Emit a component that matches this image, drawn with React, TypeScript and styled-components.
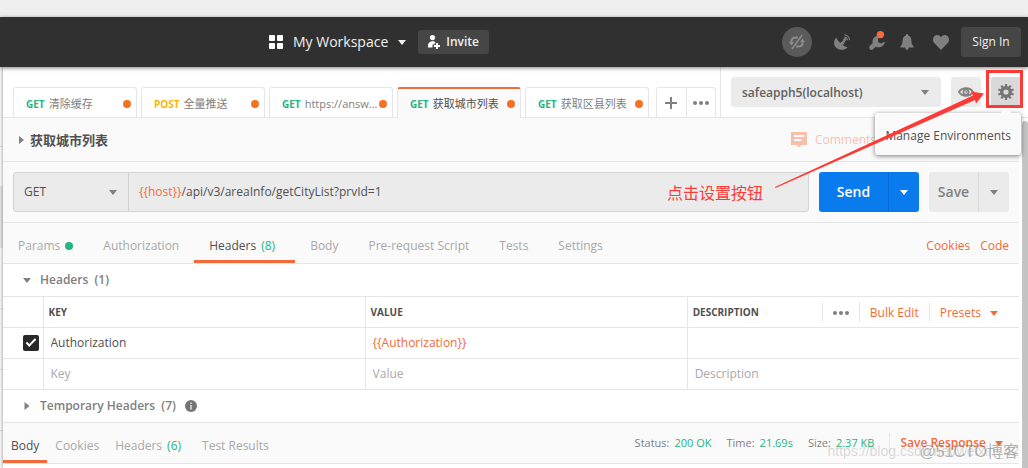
import React from "react";
import styled, { createGlobalStyle, css } from "styled-components";

const GlobalStyle = createGlobalStyle`
  *, *::before, *::after { box-sizing: border-box; }
  body {
    margin: 0;
    background: #fff;
    color: #505050;
    font-family: "Open Sans", "Noto Sans CJK SC", sans-serif;
    font-size: 12px;
    line-height: 20px;
  }
  html, body { height: 100%; overflow: hidden; }
  #root { height: 100%; }
  button, input, select {
    font: inherit;
    color: inherit;
    margin: 0;
    padding: 0;
    border: 0;
    border-radius: 0;
    background: none;
  }
  button { cursor: pointer; white-space: nowrap; }
  h2 { margin: 0; font: inherit; }
  a { color: inherit; text-decoration: none; }
`;

const ORANGE = "#f26b3a";
const GREEN = "#26b47f";
const LINE = "#e6e6e6";
const RED = "#fd3a36";

/* ---------- frame ---------- */

const Page = styled.div`
  position: relative;
  display: flex;
  flex-direction: column;
  min-height: 100%;
  overflow: hidden;
`;

const TitleStrip = styled.div`
  height: 17px;
  background: #efefef;
`;

const TopBar = styled.header`
  position: relative;
  z-index: 2;
  display: flex;
  align-items: center;
  justify-content: space-between;
  height: 50px;
  padding: 0 7px 0 269px;
  background: #303030;
  box-shadow: 0 1px 4px rgba(0, 0, 0, 0.5);
  color: #f0f0f0;
`;

const WorkspaceGroup = styled.div`
  display: flex;
  align-items: center;
`;

const WorkspaceButton = styled.button`
  display: flex;
  align-items: center;
  gap: 10px;
  font-size: 14px;
  font-weight: 500;
  margin-right: 12px;
`;

const InviteButton = styled.button`
  display: flex;
  align-items: center;
  gap: 5px;
  height: 24px;
  padding: 0 10px 0 9px;
  border-radius: 3px;
  background: #464646;
  font-weight: 600;
`;

const TopActions = styled.div`
  display: flex;
  justify-content: flex-end;
  align-items: center;
`;

const TopIcon = styled.button<{ $w: number; $gap: number }>`
  display: flex;
  justify-content: center;
  width: ${(p) => p.$w}px;
  margin-right: ${(p) => p.$gap}px;
  color: #808080;
`;

const SyncBadge = styled.button`
  display: grid;
  place-items: center;
  width: 30px;
  height: 30px;
  margin-right: 20px;
  border-radius: 50%;
  background: #5a5a5a;
  color: #8c8c8c;
`;

const SignIn = styled.button`
  width: 60px;
  height: 30px;
  border-radius: 3px;
  background: #464646;
`;

const Workarea = styled.div`
  display: flex;
  flex: 1;
`;

const SidebarEdge = styled.aside`
  flex: none;
  width: 3px;
  background: linear-gradient(
    #fff 0 79px, #e6e6e6 79px 80px, #fff 80px 119px,
    #ebebeb 119px 181px, #fff 181px 241px,
    #e6e6e6 241px 242px, #fff 242px 302px,
    #e6e6e6 302px 303px, #fff 303px 363px,
    #e6e6e6 363px 364px, #fff 364px
  );
`;

const Main = styled.main`
  flex: 1;
  min-width: 0;
  display: flex;
  flex-direction: column;
  box-shadow: 0 0 4px rgba(0, 0, 0, 0.5);
`;

/* ---------- request tabs and environment ---------- */

const TabStrip = styled.div`
  display: flex;
  height: 51px;
  border-bottom: 1px solid ${LINE};
  background: #fff;
`;

const Tabs = styled.div`
  flex: 1;
  min-width: 0;
  display: flex;
  align-items: flex-end;
  gap: 4px;
  padding: 0 4px 0 10px;
`;

const Tab = styled.button<{ $active?: boolean }>`
  display: flex;
  align-items: center;
  flex: 0 1 124px;
  height: 30px;
  padding: 3px 5px 0 12px;
  border: 1px solid ${LINE};
  border-bottom: 0;
  border-radius: 3px 3px 0 0;
  color: #808080;
  ${(p) =>
    p.$active &&
    css`
      height: 31px;
      margin-bottom: -1px;
      padding-top: 1px;
      border-top: 2px solid ${ORANGE};
      background: #fafafa;
      color: #505050;
    `}
`;

const Method = styled.span<{ $post?: boolean }>`
  margin-right: 4px;
  font-size: 10px;
  font-weight: 700;
  color: ${(p) => (p.$post ? "#ffb400" : GREEN)};
`;

const TabName = styled.span`
  flex: 1;
  font-size: 11px;
  text-align: left;
`;

const Dot = styled.span<{ $color: string }>`
  flex: none;
  width: 8px;
  height: 8px;
  border-radius: 50%;
  background: ${(p) => p.$color};
`;

const TabTools = styled.div`
  display: flex;
  width: 60px;
  height: 30px;
  margin-left: 3px;
  border: 1px solid ${LINE};
  border-bottom: 0;
  border-radius: 3px 3px 0 0;
`;

const TabTool = styled.button`
  flex: 1;
  display: grid;
  place-items: center;
  color: #808080;
  & + & { border-left: 1px solid ${LINE}; }
`;

const EnvBar = styled.div`
  display: flex;
  align-items: center;
  gap: 10px;
  padding: 0 7px 0 10px;
  border-left: 1px solid ${LINE};
`;

const SelectWrap = styled.label`
  display: grid;
  align-items: center;
  & > * { grid-area: 1 / 1; }
  & > svg { justify-self: end; margin-right: 12px; pointer-events: none; color: #808080; }
`;

const EnvSelect = styled.select`
  appearance: none;
  width: 210px;
  height: 30px;
  padding: 1px 11px 0;
  border-radius: 3px;
  background: #ebebeb;
  color: #606060;
  font-weight: 600;
`;

const SquareButton = styled.button<{ $pressed?: boolean }>`
  display: grid;
  place-items: center;
  width: 30px;
  height: 30px;
  border-radius: 3px;
  background: ${(p) => (p.$pressed ? "#d9d9d9" : "#ebebeb")};
  color: #808080;
`;

const GearSlot = styled.div`
  position: relative;
`;

const GearFrame = styled.span`
  position: absolute;
  inset: -7px -2px -1px -5px;
  border: 3px solid ${RED};
  pointer-events: none;
  z-index: 4;
`;

const Tooltip = styled.div`
  position: absolute;
  z-index: 3;
  top: 36px;
  right: 0;
  padding: 13px 10px 9px;
  border-radius: 3px;
  background: #fafafa;
  box-shadow: 0 1px 5px rgba(0, 0, 0, 0.5);
  white-space: nowrap;
  &::before {
    content: "";
    position: absolute;
    top: -4px;
    right: 11px;
    width: 8px;
    height: 8px;
    background: #fafafa;
    transform: rotate(45deg);
  }
`;

/* ---------- request builder ---------- */

const Scroller = styled.div`
  flex: 1;
  display: flex;
  background: #fff;
`;

const Content = styled.div`
  flex: 1;
  min-width: 0;
`;

const ScrollTrack = styled.div`
  flex: none;
  width: 9px;
  padding: 3px 0 0 3px;
  background: #fff;
  display: flex;
`;

const ScrollThumb = styled.div`
  flex: 1;
  border-radius: 3px 3px 0 0;
  background: #c4c4c4;
`;

const NameRow = styled.div`
  display: flex;
  align-items: center;
  justify-content: space-between;
  height: 44px;
  padding: 0 143px 0 16px;
  border-bottom: 1px solid ${LINE};
  background: #fafafa;
`;

const RequestName = styled.h2`
  display: flex;
  align-items: center;
  gap: 6px;
  font-size: 13px;
  font-weight: 700;
`;

const CommentsButton = styled.button`
  display: flex;
  align-items: center;
  gap: 8px;
  color: ${ORANGE};
  opacity: 0.4;
`;

const UrlRow = styled.div`
  display: flex;
  gap: 10px;
  padding: 10px;
  border-bottom: 1px solid ${LINE};
  background: #fafafa;
`;

const UrlBox = styled.div`
  flex: 1;
  min-width: 0;
  display: flex;
  height: 40px;
  border: 1px solid #d4d4d4;
  border-radius: 3px;
  background: #ebebeb;
`;

const MethodSelect = styled.select`
  appearance: none;
  width: 115px;
  height: 38px;
  padding: 0 10px;
  border-right: 1px solid #d4d4d4;
  font-weight: 500;
`;

const UrlField = styled.div`
  flex: 1;
  min-width: 0;
  display: grid;
  align-items: center;
  padding: 0 10px;
  & > * { grid-area: 1 / 1; }
`;

const UrlInput = styled.input`
  width: 100%;
  height: 38px;
  color: transparent;
  caret-color: #505050;
`;

const UrlText = styled.div`
  white-space: nowrap;
  overflow: hidden;
`;

const Variable = styled.span`
  color: ${ORANGE};
`;

const SplitButton = styled.div<{ $primary?: boolean }>`
  display: flex;
  flex: none;
  height: 40px;
  border-radius: 3px;
  overflow: hidden;
  font-size: 14px;
  font-weight: 600;
  background: ${(p) => (p.$primary ? "#097bed" : "#ebebeb")};
  color: ${(p) => (p.$primary ? "#fff" : "#808080")};
  & > button:first-child { width: ${(p) => (p.$primary ? 69 : 49)}px; }
  & > button:last-child {
    display: grid;
    place-items: center;
    width: 31px;
    border-left: 1px solid ${(p) => (p.$primary ? "#056cd3" : "#d9d9d9")};
  }
`;

const SectionTabs = styled.nav`
  display: flex;
  height: 41px;
  padding: 0 10px 0 0;
  border-bottom: 1px solid ${LINE};
  background: #fafafa;
`;

const Count = styled.span`
  color: ${GREEN};
`;

const SectionTab = styled.button<{ $active?: boolean; $tight?: boolean }>`
  display: flex;
  align-items: center;
  gap: 5px;
  padding: ${(p) => (p.$tight ? "9px 8px 0" : "8px 15px 0")};
  border-bottom: 3px solid ${(p) => (p.$active ? ORANGE : "transparent")};
  color: ${(p) => (p.$active ? "#505050" : "#a9a9a9")};
  & > ${Count} { margin-right: 5px; }
`;

const RequestLinks = styled.div`
  display: flex;
  align-items: center;
  gap: 10px;
  margin-left: auto;
  padding-top: 6px;
  color: ${ORANGE};
`;

const GroupTitle = styled.button`
  display: flex;
  align-items: center;
  width: 100%;
  height: 32px;
  padding: 0 20px;
  color: #808080;
  font-weight: 600;
  & > svg:first-child { width: 8px; margin-right: 9px; }
  & > svg:last-child:not(:first-child) { margin-left: 9px; }
`;

const Table = styled.table`
  width: 100%;
  border-collapse: collapse;
  table-layout: fixed;
  border-top: 1px solid ${LINE};
  th, td {
    height: 31px;
    padding: 0 7px;
    border-bottom: 1px solid ${LINE};
    text-align: left;
    font-weight: 400;
  }
  th { padding: 0 5px; font-size: 10px; font-weight: 700; }
  th + th, td + td { border-left: 1px solid ${LINE}; }
`;

const CheckColumn = styled.col`
  width: 40px;
`;

const FieldColumn = styled.col`
  width: 31.7%;
`;

const CheckCell = styled.td`
  && { padding: 0 0 0 20px; }
`;

const CheckBox = styled.input`
  appearance: none;
  display: block;
  width: 16px;
  height: 16px;
  border-radius: 2px;
  background: #282828;
  &:checked::after {
    content: "";
    display: block;
    width: 10px;
    height: 5px;
    margin: 4px 0 0 3px;
    border: solid #fff;
    border-width: 0 0 2px 2px;
    transform: rotate(-45deg);
  }
`;

const CellInput = styled.input<{ $variable?: boolean }>`
  display: block;
  width: 100%;
  height: 20px;
  color: ${(p) => (p.$variable ? ORANGE : "#505050")};
  &::placeholder { color: #a9a9a9; opacity: 1; }
`;

const HeadTools = styled.div`
  display: flex;
  align-items: center;
  justify-content: space-between;
`;

const ToolGroup = styled.div`
  display: flex;
  align-items: center;
  margin-right: 6px;
  font-size: 12px;
  font-weight: 400;
  color: ${ORANGE};
`;

const ToolButton = styled.button`
  display: flex;
  align-items: center;
  gap: 9px;
  height: 20px;
  padding: 2px 10px 0;
  border-left: 1px solid ${LINE};
`;

/* ---------- response ---------- */

const ResponseBar = styled(SectionTabs)`
  border-top: 1px solid ${LINE};
  height: 42px;
`;

const Status = styled.div`
  display: flex;
  align-items: center;
  gap: 15px;
  margin-left: auto;
  font-size: 11px;
  color: #808080;
`;

const Metric = styled.span`
  display: flex;
  gap: 5px;
`;

const SaveResponse = styled.button`
  display: flex;
  align-items: center;
  gap: 9px;
  height: 20px;
  padding: 0 6px 0 10px;
  border-left: 1px solid ${LINE};
  color: ${ORANGE};
  font-size: 12px;
  font-weight: 600;
`;

/* ---------- annotation ---------- */

const Note = styled.p`
  position: absolute;
  z-index: 5;
  top: 182px;
  right: 265px;
  margin: 0;
  font-size: 16px;
  line-height: 22px;
  color: ${RED};
`;

const Arrow = styled.svg`
  position: absolute;
  z-index: 5;
  top: 88px;
  right: 43px;
  pointer-events: none;
`;

const Watermark = styled.span<{ $front?: boolean }>`
  position: absolute;
  z-index: 5;
  bottom: ${(p) => (p.$front ? 6 : 7)}px;
  right: 9px;
  font-family: "Liberation Sans", "Noto Sans CJK SC", sans-serif;
  font-size: ${(p) => (p.$front ? 16 : 14)}px;
  white-space: nowrap;
  pointer-events: none;
  color: ${(p) => (p.$front ? "rgba(120,120,120,0.55)" : "rgba(150,150,150,0.35)")};
`;

/* ---------- icons ---------- */

const Caret = ({ side }: { side?: boolean }) =>
  side ? (
    <svg width="5" height="8" viewBox="0 0 5 8" fill="#808080"><path d="M0 0L5 4L0 8Z" /></svg>
  ) : (
    <svg width="8" height="5" viewBox="0 0 8 5" fill="currentColor"><path d="M0 0H8L4 5Z" /></svg>
  );

const More = () => (
  <svg width="16" height="4" viewBox="0 0 16 4" fill="#808080">
    <circle cx="2" cy="2" r="2" /><circle cx="8" cy="2" r="2" /><circle cx="14" cy="2" r="2" />
  </svg>
);

const GridIcon = () => (
  <svg width="14" height="14" viewBox="0 0 14 14" fill="#fff">
    <rect width="6" height="6" rx="1" /><rect x="8" width="6" height="6" rx="1" />
    <rect y="8" width="6" height="6" rx="1" /><rect x="8" y="8" width="6" height="6" rx="1" />
  </svg>
);

const InviteIcon = () => (
  <svg width="14" height="14" viewBox="0 0 14 14" fill="#fff">
    <circle cx="5.5" cy="2.6" r="2.6" />
    <path d="M1 12.5V10.5C1 8 3 6.2 5.5 6.2C7 6.2 8 6.7 8.6 7.4L7.5 8.4V9.5H5.5V12.5Z" />
    <path d="M9 8H11V10H13V12H11V14H9V12H7V10H9Z" />
  </svg>
);

const SyncIcon = () => (
  <svg width="16" height="16" viewBox="0 0 16 16" fill="none" stroke="currentColor" strokeWidth="2">
    <path d="M2.4 9V7.6C2.4 5 4.5 3.4 7.5 3.4H9" />
    <path d="M13.6 7V8.4C13.6 11 11.5 12.6 8.5 12.6H7" />
    <path d="M0 8L2.4 11.5L5 8ZM11 8L13.6 4.5L16 8Z" fill="currentColor" stroke="none" />
    <path d="M13.2 1L3 15" strokeWidth="1.6" />
  </svg>
);

const DishIcon = () => (
  <svg width="16" height="16" viewBox="0 0 16 16" fill="currentColor">
    <path d="M2.2 3.4C-.6 6.5 -.6 11 2.3 13.7C5 16.5 10.2 16.6 13.6 13.4Q9.5 12.4 6 8.8Q3 6 2.2 3.4Z" />
    <path d="M5 11L11 5.8L9 10Z" stroke="currentColor" strokeWidth="1.4" />
    <circle cx="10.8" cy="5.6" r="1.5" />
    <path d="M10.3 3A3.2 3.2 0 0 1 13.3 6.2M10.3 .7A5.6 5.6 0 0 1 15.5 6.2" fill="none" stroke="currentColor" strokeWidth="1.1" />
  </svg>
);

const WrenchIcon = () => (
  <svg width="18" height="20" viewBox="0 0 18 20" overflow="visible">
    <path
      transform="translate(1 2)"
      fill="#808080"
      d="M9 1.4C5.2 2 2.8 5.200 3.8 9L.5 12.200C-.6 14.400 1.600 16.800 3.800 15.600L6.600 12.800C10.800 14.400 15.400 12.200 16 7.400L12.200 9.600L9.200 8.200L9 5L12 1.400Z"
    />
    <circle cx="12.4" cy="2.6" r="3.7" fill={ORANGE} />
  </svg>
);

const BellIcon = () => (
  <svg width="14" height="16" viewBox="0 0 14 16" fill="currentColor">
    <path d="M7 0C7.8 0 8.3 .7 8.2 1.4C10.6 2.1 11.4 4.3 11.4 6.5C11.4 9.5 12.2 11 13.5 12.3V13.6H.5V12.3C1.8 11 2.6 9.5 2.6 6.5C2.6 4.3 3.4 2.1 5.8 1.4C5.7 .7 6.2 0 7 0ZM5.3 13.6H8.7C8.5 15.2 7.9 16 7 16S5.5 15.2 5.3 13.6Z" />
  </svg>
);

const HeartIcon = () => (
  <svg width="16" height="15" viewBox="0 0 16 15" fill="currentColor">
    <path d="M8 15L1.5 8.3C-.5 6.2-.4 3 1.4 1.3C3.4-.6 6.6-.3 8 2.4C9.4-.3 12.6-.6 14.6 1.3C16.4 3 16.5 6.2 14.5 8.3Z" />
  </svg>
);

const EyeIcon = () => (
  <svg width="16" height="10" viewBox="0 0 16 10" fill="none" stroke="currentColor">
    <path d="M1 5C4.2 0 11.8 0 15 5C11.8 10 4.2 10 1 5Z" strokeWidth="2" />
    <circle cx="8" cy="5" r="2.6" strokeWidth="1.8" />
    <circle cx="8.4" cy="4.7" r="1" fill="currentColor" stroke="none" />
  </svg>
);

const GearIcon = () => (
  <svg width="16" height="16" viewBox="0 0 16 16" fill="none" stroke="#757575">
    <circle cx="8" cy="8" r="4.3" strokeWidth="3.4" />
    {[0, 36, 72, 108, 144, 180, 216, 252, 288, 324].map((a) => (
      <path key={a} d="M8 0V3" strokeWidth="2.2" transform={`rotate(${a} 8 8)`} />
    ))}
  </svg>
);

const CommentIcon = () => (
  <svg width="16" height="16" viewBox="0 0 16 16">
    <path fill={ORANGE} fillRule="evenodd" d="M0 0H16V13H10.5L8 15.5L5.5 13H0ZM3 3V5H13V3ZM3 7V9H10V7Z" />
  </svg>
);

const InfoIcon = () => (
  <svg width="12" height="12" viewBox="0 0 12 12">
    <circle cx="6" cy="6" r="6" fill="#757575" />
    <path d="M5.2 2.5H6.8V4H5.2ZM5.2 5H6.8V9.5H5.2Z" fill="#ddd" />
  </svg>
);

/* ---------- data ---------- */

const requestTabs = [
  { method: "GET", name: "清除缓存" },
  { method: "POST", name: "全量推送" },
  { method: "GET", name: "https://answ..." },
  { method: "GET", name: "获取城市列表", active: true },
  { method: "GET", name: "获取区县列表" },
];

export default function App() {
  return (
    <Page>
      <GlobalStyle />
      <TitleStrip />
      <TopBar>
        <WorkspaceGroup>
          <WorkspaceButton><GridIcon />My Workspace<Caret /></WorkspaceButton>
          <InviteButton><InviteIcon />Invite</InviteButton>
        </WorkspaceGroup>
        <TopActions>
          <SyncBadge aria-label="Sync off"><SyncIcon /></SyncBadge>
          <TopIcon $w={20} $gap={16} aria-label="Capture"><DishIcon /></TopIcon>
          <TopIcon $w={18} $gap={14} aria-label="Settings"><WrenchIcon /></TopIcon>
          <TopIcon $w={14} $gap={19} aria-label="Notifications"><BellIcon /></TopIcon>
          <TopIcon $w={16} $gap={12} aria-label="Favourites"><HeartIcon /></TopIcon>
          <SignIn>Sign In</SignIn>
        </TopActions>
      </TopBar>

      <Workarea>
        <SidebarEdge />
        <Main>
          <TabStrip>
            <Tabs>
              {requestTabs.map((t) => (
                <Tab key={t.name} $active={t.active}>
                  <Method $post={t.method === "POST"}>{t.method}</Method>
                  <TabName>{t.name}</TabName>
                  <Dot $color="#f47023" />
                </Tab>
              ))}
              <TabTools>
                <TabTool aria-label="New tab">
                  <svg width="12" height="12" viewBox="0 0 12 12" stroke="#808080" strokeWidth="2"><path d="M6 0V12M0 6H12" /></svg>
                </TabTool>
                <TabTool aria-label="Tab options"><More /></TabTool>
              </TabTools>
            </Tabs>
            <EnvBar>
              <SelectWrap>
                <EnvSelect aria-label="Environment"><option>safeapph5(localhost)</option></EnvSelect>
                <Caret />
              </SelectWrap>
              <SquareButton aria-label="Quick look"><EyeIcon /></SquareButton>
              <GearSlot>
                <SquareButton $pressed aria-label="Environment settings"><GearIcon /></SquareButton>
                <Tooltip role="tooltip">Manage Environments</Tooltip>
                <GearFrame />
              </GearSlot>
            </EnvBar>
          </TabStrip>

          <Scroller>
            <Content>
              <NameRow>
                <RequestName><Caret side />获取城市列表</RequestName>
                <CommentsButton><CommentIcon />Comments</CommentsButton>
              </NameRow>

              <UrlRow>
                <UrlBox>
                  <SelectWrap>
                    <MethodSelect aria-label="Method"><option>GET</option></MethodSelect>
                    <Caret />
                  </SelectWrap>
                  <UrlField>
                    <UrlText aria-hidden="true"><Variable>{"{{host}}"}</Variable>/api/v3/areaInfo/getCityList?prvId=1</UrlText>
                    <UrlInput aria-label="Request URL" defaultValue="{{host}}/api/v3/areaInfo/getCityList?prvId=1" />
                  </UrlField>
                </UrlBox>
                <SplitButton $primary>
                  <button>Send</button>
                  <button aria-label="Send options"><Caret /></button>
                </SplitButton>
                <SplitButton>
                  <button>Save</button>
                  <button aria-label="Save options"><Caret /></button>
                </SplitButton>
              </UrlRow>

              <SectionTabs>
                <SectionTab>Params<Dot $color={GREEN} /></SectionTab>
                <SectionTab>Authorization</SectionTab>
                <SectionTab $active>Headers<Count>(8)</Count></SectionTab>
                <SectionTab>Body</SectionTab>
                <SectionTab>Pre-request Script</SectionTab>
                <SectionTab>Tests</SectionTab>
                <SectionTab>Settings</SectionTab>
                <RequestLinks>
                  <a href="#cookies">Cookies</a>
                  <a href="#code">Code</a>
                </RequestLinks>
              </SectionTabs>

              <GroupTitle><Caret />Headers&nbsp; (1)</GroupTitle>
              <Table>
                <colgroup>
                  <CheckColumn />
                  <FieldColumn />
                  <FieldColumn />
                  <col />
                </colgroup>
                <thead>
                  <tr>
                    <th aria-label="Enabled" />
                    <th>KEY</th>
                    <th>VALUE</th>
                    <th>
                      <HeadTools>
                        DESCRIPTION
                        <ToolGroup>
                          <ToolButton aria-label="Column options"><More /></ToolButton>
                          <ToolButton>Bulk Edit</ToolButton>
                          <ToolButton>Presets<Caret /></ToolButton>
                        </ToolGroup>
                      </HeadTools>
                    </th>
                  </tr>
                </thead>
                <tbody>
                  <tr>
                    <CheckCell><CheckBox type="checkbox" defaultChecked aria-label="Authorization enabled" /></CheckCell>
                    <td><CellInput aria-label="Key" defaultValue="Authorization" /></td>
                    <td><CellInput aria-label="Value" $variable defaultValue="{{Authorization}}" /></td>
                    <td><CellInput aria-label="Description" /></td>
                  </tr>
                  <tr>
                    <td />
                    <td><CellInput aria-label="New key" placeholder="Key" /></td>
                    <td><CellInput aria-label="New value" placeholder="Value" /></td>
                    <td><CellInput aria-label="New description" placeholder="Description" /></td>
                  </tr>
                </tbody>
              </Table>
              <GroupTitle><Caret side />Temporary Headers&nbsp; (7)<InfoIcon /></GroupTitle>

              <ResponseBar>
                <SectionTab $tight $active>Body</SectionTab>
                <SectionTab $tight>Cookies</SectionTab>
                <SectionTab $tight>Headers<Count>(6)</Count></SectionTab>
                <SectionTab $tight>Test Results</SectionTab>
                <Status>
                  <Metric>Status: <Count>200 OK</Count></Metric>
                  <Metric>Time: <Count>21.69s</Count></Metric>
                  <Metric>Size: <Count>2.37 KB</Count></Metric>
                  <SaveResponse>Save Response<Caret /></SaveResponse>
                </Status>
              </ResponseBar>
            </Content>
            <ScrollTrack><ScrollThumb /></ScrollTrack>
          </Scroller>
        </Main>
      </Workarea>

      <Note>点击设置按钮</Note>
      <Arrow width="210" height="102" viewBox="0 0 210 102" fill={RED}>
        <path d="M0 99L198 7.5L196 3.5L209 5.5L201 15.5L200 12L0.5 100Z" />
      </Arrow>
      <Watermark>https://blog.csdn.net/weixin_42</Watermark>
      <Watermark $front>@51CTO博客</Watermark>
    </Page>
  );
}
